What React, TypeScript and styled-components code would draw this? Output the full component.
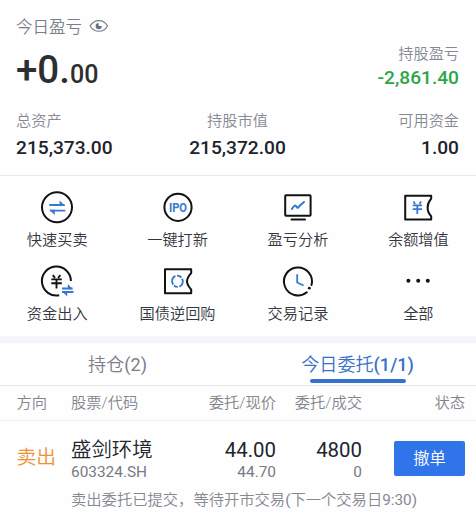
import React from 'react';
import styled, { createGlobalStyle } from 'styled-components';

const GlobalStyle = createGlobalStyle`
  * { box-sizing: border-box; }
  body {
    margin: 0;
    background: #fefefe;
    font-family: Roboto, "Noto Sans CJK SC", sans-serif;
    color: #20232c;
  }
`;

const Page = styled.main`
  width: 476px;
  height: 525px;
  overflow: hidden;
  background: #fefefe;
`;

const Summary = styled.section`
  height: 176px;
  padding: 14px 17px 0 16px;
  border-bottom: 1px solid #e9e9ec;
`;

const TodayLabel = styled.div`
  display: flex;
  align-items: center;
  gap: 7px;
  height: 24px;
  font-size: 16.5px;
  font-weight: 350;
  color: #7b7f8c;
`;

const ProfitRow = styled.div`
  display: flex;
  justify-content: space-between;
  height: 72px;
`;

const BigProfit = styled.div`
  padding-top: 9px;
  font-size: 38.5px;
  line-height: 46px;
  font-weight: 500;
  color: #2d2e30;
  white-space: nowrap;
  small { font-size: 25px; }
`;

const Metric = styled.div<{ $align: string }>`
  text-align: ${(p) => p.$align};
`;

const MetricLabel = styled.div`
  height: 26px;
  line-height: 26px;
  font-size: 15.2px;
  font-weight: 350;
  color: #858993;
`;

const MetricValue = styled.div<{ $loss?: boolean; $gap: number }>`
  margin-top: ${(p) => p.$gap}px;
  line-height: 26px;
  font-size: 19.15px;
  font-weight: 500;
  color: ${(p) => (p.$loss ? '#2da548' : '#20222b')};
`;

const HoldingProfit = styled.div`
  padding-top: 3px;
`;

const Metrics = styled.div`
  display: grid;
  grid-template-columns: 1fr 1fr 1fr;
  margin-top: -2px;
`;

const Actions = styled.nav`
  display: grid;
  grid-template-columns: repeat(4, 120.4px);
  grid-auto-rows: 74px;
  height: 160px;
  margin-left: -3px;
  padding-top: 13px;
`;

const Action = styled.div`
  display: flex;
  flex-direction: column;
  align-items: center;
  svg { display: block; }
`;

const ActionLabel = styled.span`
  height: 26px;
  line-height: 26px;
  font-size: 15.2px;
  color: #34363d;
  font-weight: 350;
  white-space: nowrap;
`;

const Divider = styled.div`
  height: 7px;
  background: #f5f5fc;
`;

const Tabs = styled.div`
  display: grid;
  grid-template-columns: 235px 241px;
  height: 43px;
  border-bottom: 1px solid #e6e7ea;
`;

const Tab = styled.div<{ $active?: boolean }>`
  display: flex;
  flex-direction: column;
  align-items: center;
  padding: 8px 0 0 ${(p) => (p.$active ? '4px' : '0')};
  font-size: 18.1px;
  line-height: 28px;
  font-weight: 350;
  color: ${(p) => (p.$active ? '#3772c8' : '#7c8089')};
  span { font-weight: ${(p) => (p.$active ? 500 : 400)}; }
  &::after {
    content: '';
    width: 96px;
    height: 4px;
    border-radius: 2px;
    background: ${(p) => (p.$active ? '#3572d0' : 'transparent')};
  }
`;

const columns = '54.5px 118px 87px 86px 103px';

const TableHead = styled.div`
  display: grid;
  grid-template-columns: ${columns};
  height: 35px;
  padding-left: 16.5px;
  line-height: 35px;
  font-size: 15.3px;
  font-weight: 350;
  color: #82858e;
  border-bottom: 1px solid #f1f1f3;
`;

const HeadCell = styled.div<{ $right?: boolean }>`
  text-align: ${(p) => (p.$right ? 'right' : 'left')};
  white-space: nowrap;
`;

const OrderRow = styled.div`
  display: grid;
  grid-template-columns: ${columns};
  height: 65px;
  padding: 15px 0 0 16.5px;
`;

const Direction = styled.div`
  padding-top: 8px;
  line-height: 28px;
  font-size: 19.8px;
  font-weight: 350;
  color: #ee9233;
`;

const Cell = styled.div<{ $right?: boolean }>`
  text-align: ${(p) => (p.$right ? 'right' : 'left')};
  white-space: nowrap;
`;

const Main = styled.div<{ $name?: boolean }>`
  height: 28px;
  line-height: 28px;
  font-size: 20.4px;
  font-weight: ${(p) => (p.$name ? 350 : 400)};
  color: #22242e;
`;

const Sub = styled.div`
  height: 20px;
  margin-top: -2px;
  line-height: 20px;
  font-size: 15.4px;
  color: #777b83;
`;

const CancelButton = styled.button`
  display: block;
  width: 71px;
  height: 35px;
  margin: 5px 0 0 auto;
  padding: 0;
  border: 0;
  border-radius: 2px;
  background: #3074ea;
  color: #fff;
  font: 350 16.3px/33px Roboto, "Noto Sans CJK SC", sans-serif;
`;

const Notice = styled.div`
  padding-left: 71px;
  line-height: 28px;
  font-size: 15.3px;
  font-weight: 350;
  color: #858992;
  white-space: nowrap;
  span { font-weight: 400; }
`;

const INK = '#111214';
const BLUE = '#3779d0';

const EyeIcon = () => (
  <svg width="20" height="14" viewBox="0 0 20 14" fill="none">
    <path d="M1 7C5.5-.2 14.5-.2 18.5 7C14.5 14 5.5 14 1 7Z" stroke="#7b7f8c" strokeWidth="1.2" />
    <path d="M9.5 4A3.1 3.1 0 1 0 12.8 7H9.8Z" fill="#68728a" />
  </svg>
);

const Glyph = ({ children }: { children: React.ReactNode }) => (
  <svg width="38" height="38" viewBox="0 0 38 38" fill="none" stroke={INK} strokeWidth="2">
    {children}
  </svg>
);

const TradeIcon = () => (
  <Glyph>
    <circle cx="19" cy="18.3" r="15" />
    <path d="M11.3 16H26.5M12 21.6H27.3" stroke={BLUE} strokeWidth="1.9" />
    <path d="M21.6 11.6L27.3 16.9H21.6ZM16.8 26L11.2 20.7H16.8Z" fill={BLUE} stroke="none" />
  </Glyph>
);

const IpoText = styled.text`
  font: 700 12.8px Roboto, sans-serif;
`;

const IpoIcon = () => (
  <Glyph>
    <circle cx="19" cy="18.3" r="13.6" />
    <IpoText x="9.9" y="22.9" textLength="18" lengthAdjust="spacingAndGlyphs" fill={BLUE} stroke="none">IPO</IpoText>
  </Glyph>
);

const AnalysisIcon = () => (
  <Glyph>
    <rect x="6.2" y="6.2" width="25.4" height="20.5" rx=".8" />
    <path d="M12.5 30.5H26" strokeLinecap="round" />
    <path d="M12.8 20C15.5 15.8 16.5 15.8 17.5 17.8S19.2 18.7 21 16.5L25 13" stroke={BLUE} strokeWidth="2" strokeLinecap="round" />
  </Glyph>
);

const BalanceIcon = () => (
  <Glyph>
    <path d="M6.2 6.8H32.2V9.6C31 11 28.6 13.8 28.6 18.5S31 26 32.2 27.3V30.5H6.2Z" strokeLinejoin="round" />
    <path d="M14.4 12.5L16.2 15M22.2 12.5L20.4 15M13.7 16.3H23M13.7 20.2H23M18.3 16.3V25" stroke={BLUE} strokeWidth="1.8" />
  </Glyph>
);

const TransferIcon = () => (
  <Glyph>
    <path d="M32.9 18A14.5 14.5 0 1 0 21.2 32.3" />
    <path d="M14.8 12.2L17 15M22.3 12.2L20.1 15M13.3 16.4H23.8M13.3 20.2H23.8M18.5 16.4V25.5" strokeWidth="1.9" />
    <path d="M24 25.5H34.5M24 29H35.5" stroke={BLUE} strokeWidth="1.8" />
    <path d="M29.8 21L35 26.3H29.8ZM29.2 33.5L24 28.2H29.2Z" fill={BLUE} stroke="none" />
  </Glyph>
);

const RepoIcon = () => (
  <Glyph>
    <path d="M6 6.2H32.2V10C30.5 12 28 14.5 28 18.2S30.5 24.5 32.2 26.5V30.2H6Z" strokeLinejoin="round" />
    <path d="M14.2 21.6A5.7 5.7 0 0 1 16.4 12.9M18 12.6A5.7 5.7 0 0 1 22.4 14.5M23.1 15.6A5.7 5.7 0 0 1 20.4 23.6M18.8 23.9A5.7 5.7 0 0 1 15 22.5" stroke={BLUE} strokeWidth="1.9" />
  </Glyph>
);

const ClockIcon = () => (
  <Glyph>
    <path d="M32.5 22A14 14 0 1 0 27.8 29.3" strokeLinecap="round" />
    <circle cx="30.3" cy="25.2" r="1.4" fill={INK} stroke="none" />
    <path d="M18.2 11.2V19.5L24.6 22.5" stroke={BLUE} strokeWidth="1.8" />
  </Glyph>
);

const MoreIcon = () => (
  <Glyph>
    <g fill={INK} stroke="none">
      <circle cx="9.4" cy="17.8" r="2" />
      <circle cx="19.2" cy="17.8" r="2" />
      <circle cx="28.8" cy="17.8" r="2" />
    </g>
  </Glyph>
);

const actions = [
  { label: '快速买卖', Icon: TradeIcon },
  { label: '一键打新', Icon: IpoIcon },
  { label: '盈亏分析', Icon: AnalysisIcon },
  { label: '余额增值', Icon: BalanceIcon },
  { label: '资金出入', Icon: TransferIcon },
  { label: '国债逆回购', Icon: RepoIcon },
  { label: '交易记录', Icon: ClockIcon },
  { label: '全部', Icon: MoreIcon },
];

const metrics = [
  { label: '总资产', value: '215,373.00', align: 'left' },
  { label: '持股市值', value: '215,372.00', align: 'center' },
  { label: '可用资金', value: '1.00', align: 'right' },
];

export default function App() {
  return (
    <Page>
      <GlobalStyle />
      <Summary>
        <TodayLabel>今日盈亏<EyeIcon /></TodayLabel>
        <ProfitRow>
          <BigProfit>+0.<small>00</small></BigProfit>
          <HoldingProfit>
            <Metric $align="right">
              <MetricLabel>持股盈亏</MetricLabel>
              <MetricValue $loss $gap={-2}>-2,861.40</MetricValue>
            </Metric>
          </HoldingProfit>
        </ProfitRow>
        <Metrics>
          {metrics.map((m) => (
            <Metric key={m.label} $align={m.align}>
              <MetricLabel>{m.label}</MetricLabel>
              <MetricValue $gap={1}>{m.value}</MetricValue>
            </Metric>
          ))}
        </Metrics>
      </Summary>
      <Actions>
        {actions.map(({ label, Icon }) => (
          <Action key={label}>
            <Icon />
            <ActionLabel>{label}</ActionLabel>
          </Action>
        ))}
      </Actions>
      <Divider />
      <Tabs>
        <Tab><div>持仓<span>(2)</span></div></Tab>
        <Tab $active><div>今日委托<span>(1/1)</span></div></Tab>
      </Tabs>
      <TableHead>
        <HeadCell>方向</HeadCell>
        <HeadCell>股票/代码</HeadCell>
        <HeadCell $right>委托/现价</HeadCell>
        <HeadCell $right>委托/成交</HeadCell>
        <HeadCell $right>状态</HeadCell>
      </TableHead>
      <OrderRow>
        <Direction>卖出</Direction>
        <Cell><Main $name>盛剑环境</Main><Sub>603324.SH</Sub></Cell>
        <Cell $right><Main>44.00</Main><Sub>44.70</Sub></Cell>
        <Cell $right><Main>4800</Main><Sub>0</Sub></Cell>
        <Cell $right><CancelButton>撤单</CancelButton></Cell>
      </OrderRow>
      <Notice>卖出委托已提交，等待开市交易<span>(</span>下一个交易日<span>9:30)</span></Notice>
    </Page>
  );
}
